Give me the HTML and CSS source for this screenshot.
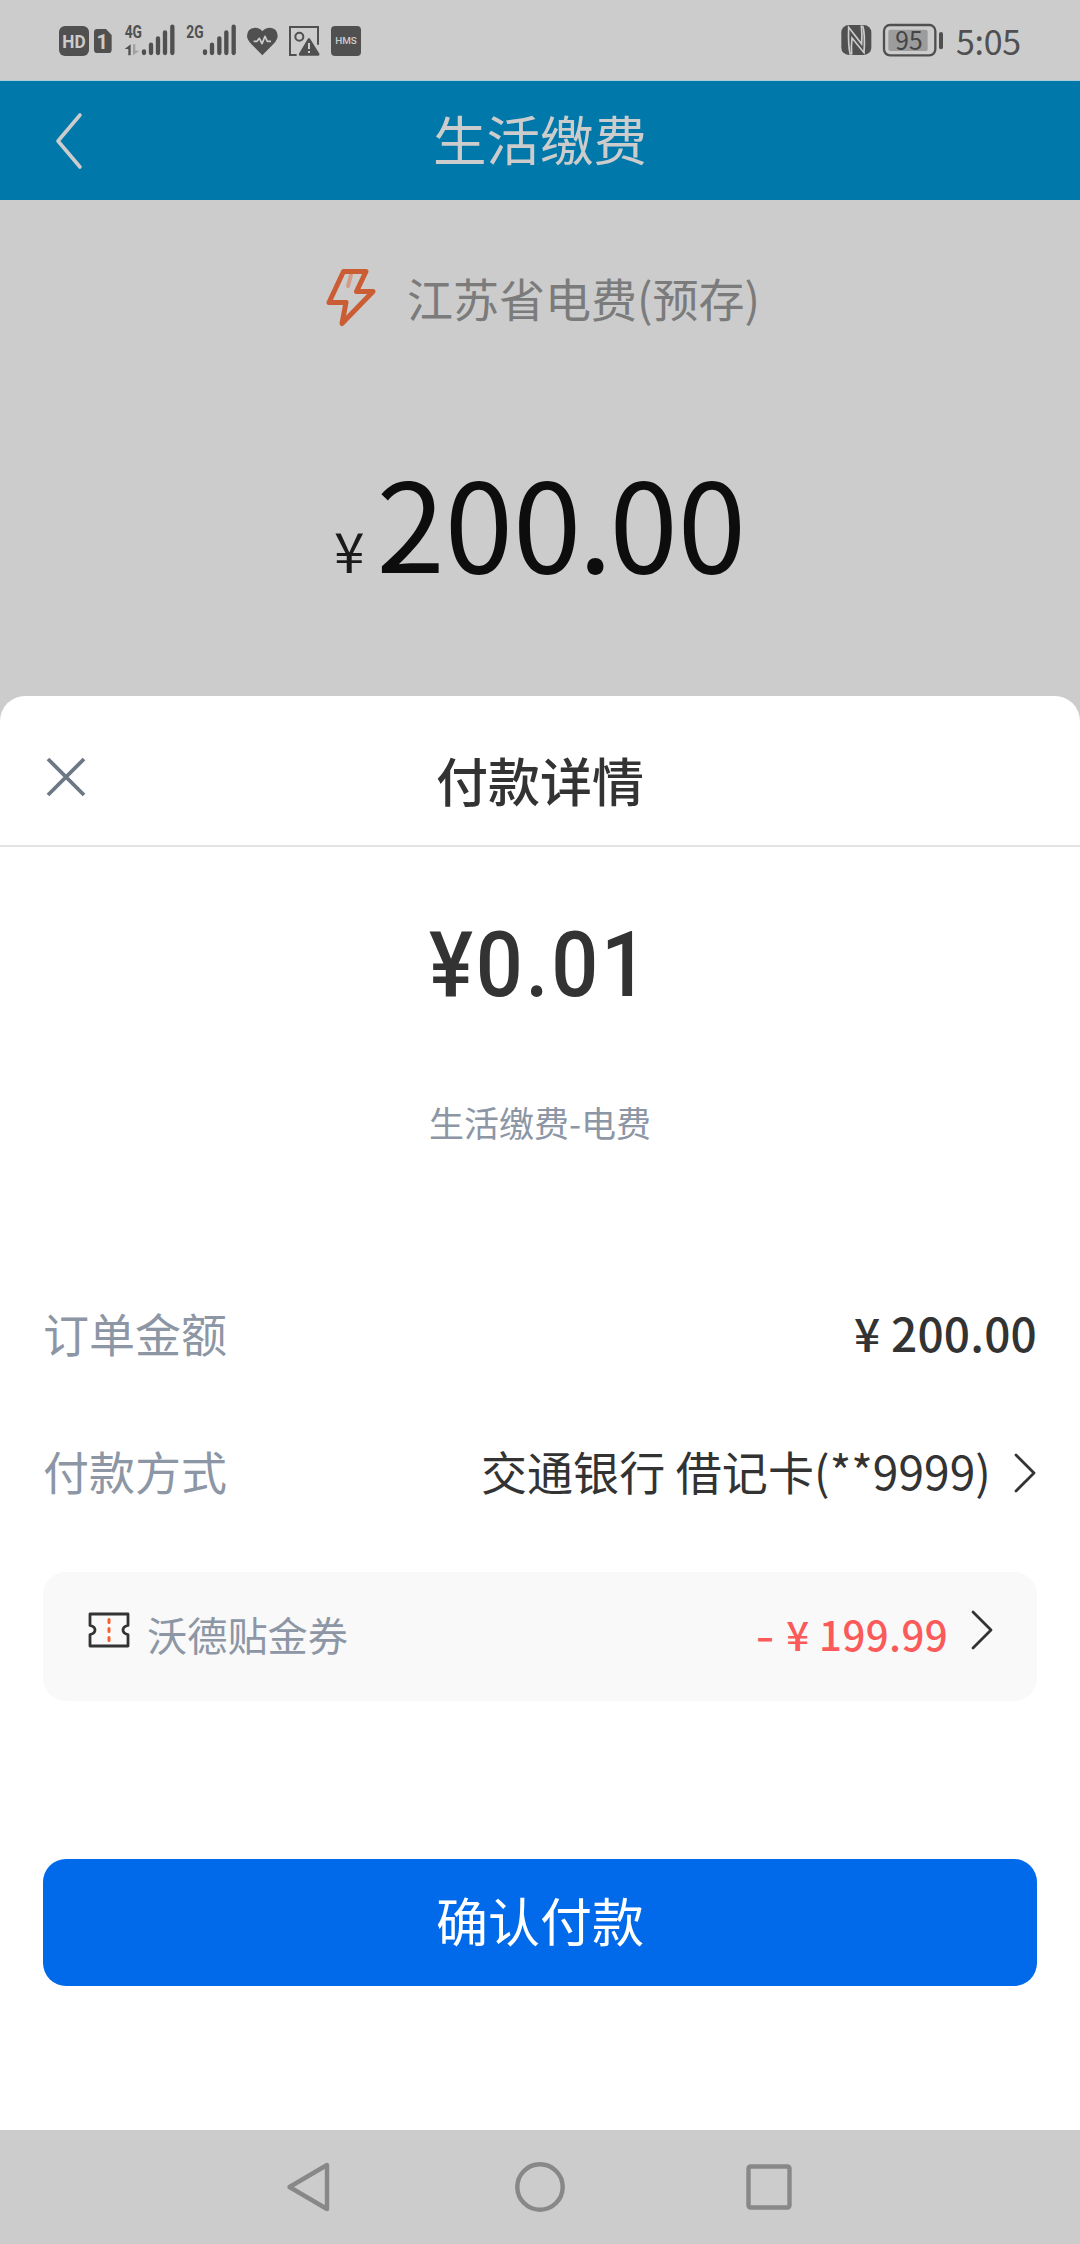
FILE: index.html
```html
<!DOCTYPE html>
<html lang="zh-CN">
<head>
<meta charset="utf-8">
<title>付款详情</title>
<link rel="stylesheet" href="styles.css">
</head>
<body>
<header class="status">
  <div class="status-icons">
    <svg width="30" height="40" viewBox="57 60 90 120"><rect x="57" y="78" width="90" height="90" rx="18" fill="#505050"/><text x="102" y="143" class="t-din" font-size="55" textLength="70" lengthAdjust="spacingAndGlyphs" fill="#ccc">HD</text></svg>
    <svg class="sim" width="18" height="40" viewBox="162 60 54 120"><path d="M172 87h26l17 18v44q0 10-10 10h-33q-10 0-10-10V97q0-10 10-10z" fill="#505050"/><text x="187" y="146" class="t-din" font-size="60" fill="#ccc">1</text></svg>
    <svg class="sig" width="51" height="40" viewBox="252 60 153 120"><text x="280" y="114" class="t-din" font-size="54" textLength="52" lengthAdjust="spacingAndGlyphs" fill="#505050">4G</text><path d="M272 133v33h-7v-19h-11z" fill="#505050"/><path d="M279 133v33l19-14h-12v-19z" fill="#a0a0a0"/><g stroke="#505050" stroke-width="13" stroke-linecap="round"><path d="M312 154v5M333 134v25M354 115v44M375 97v62M397 80v79"/></g></svg>
    <svg class="sig2" width="50" height="40" viewBox="437 60 150 120"><text x="464" y="114" class="t-din" font-size="54" textLength="52" lengthAdjust="spacingAndGlyphs" fill="#505050">2G</text><g stroke="#505050" stroke-width="13" stroke-linecap="round"><path d="M494 154v5M515 134v25M537 115v44M558 97v62M580 80v79"/></g></svg>
    <svg class="heart" width="31" height="40" viewBox="620 60 93 120"><path d="M666 166L632 131Q620 118 620 107Q621 84 644 83Q659 83 666 94Q674 83 689 83Q711 84 712 107Q712 118 700 131z" fill="#505050"/><path d="M640 124h10l7-9 8 16 9-22 7 15h11" fill="none" stroke="#ccc" stroke-width="5" stroke-linejoin="round"/></svg>
    <svg class="pic" width="30" height="40" viewBox="747 60 90 120"><path d="M770 165H750V81H834V134" fill="none" stroke="#505050" stroke-width="6"/><circle cx="778" cy="110" r="12" fill="none" stroke="#505050" stroke-width="6"/><path d="M807 119l27 44h-53z" fill="#505050" stroke="#505050" stroke-width="9" stroke-linejoin="round"/><path d="M807 129v18M807 153v6" stroke="#ccc" stroke-width="6"/></svg>
    <svg class="hms" width="30" height="40" viewBox="873 60 90 120"><rect x="873" y="78" width="90" height="90" rx="12" fill="#505050"/><text x="918" y="132" class="t-hms" font-size="27" textLength="65" lengthAdjust="spacingAndGlyphs" fill="#ccc">HMS</text></svg>
  </div>
  <div class="status-right">
    <svg width="31" height="40" viewBox="63 60 93 120"><rect x="64" y="75" width="90" height="90" rx="22" fill="#505050"/><path d="M91 164Q84 140 86 82L125 132Q127 105 124 76" fill="none" stroke="#ccc" stroke-width="5"/><path d="M128 77Q136 100 132 158L96 114Q93 140 95 164" fill="none" stroke="#ccc" stroke-width="5"/></svg>
    <svg class="battery" width="61" height="40" viewBox="190 60 183 120"><rect x="193" y="75" width="154" height="91" rx="18" fill="none" stroke="#505050" stroke-width="7"/><rect x="206" y="89" width="118" height="64" rx="6" fill="#9c9c9c"/><rect x="358" y="96" width="12" height="52" rx="6" fill="#505050"/><text x="268" y="149" class="t-cjk" font-size="75" textLength="82" lengthAdjust="spacingAndGlyphs" fill="#444">95</text></svg>
    <span class="clock">5:05</span>
  </div>
</header>
<nav class="topbar">
  <svg class="back" width="30" height="58" viewBox="0 0 30 58"><path d="M26 3L4 29L26 55" fill="none" stroke="#ccc" stroke-width="3.6" stroke-linecap="round" stroke-linejoin="round"/></svg>
  <h1>生活缴费</h1>
</nav>
<main class="bill">
  <div class="biller">
    <svg width="50" height="58" viewBox="0 0 50 58"><path d="M25 6l-3 11" stroke="#d39c88" stroke-width="4" stroke-linecap="round"/><path d="M17.500 2.500H40L30.500 22.500H47L16 54.500L20 33.500H3z" fill="none" stroke="#cb5d34" stroke-width="5" stroke-linejoin="round"/></svg>
    <span>江苏省电费(预存)</span>
  </div>
  <div class="bill-amount"><span class="yen">¥</span><span class="num">200<i>.</i>00</span></div>
</main>
<section class="sheet">
  <div class="sheet-head">
    <svg class="close" width="40" height="40" viewBox="0 0 40 40"><path d="M2 2L38 38M38 2L2 38" stroke="#6d7885" stroke-width="3.800"/></svg>
    <h2>付款详情</h2>
  </div>
  <div class="pay">¥0.01</div>
  <div class="desc">生活缴费-电费</div>
  <div class="row order"><span class="label">订单金额</span><span class="value strong">¥ 200.00</span></div>
  <div class="row method"><span class="label">付款方式</span><span class="value">交通银行 借记卡(**9999)</span>
    <svg class="chev" width="24" height="40" viewBox="0 0 24 40"><path d="M3 2L21 20L3 38" fill="none" stroke="#333" stroke-width="2.800" stroke-linecap="round" stroke-linejoin="round"/></svg>
  </div>
  <div class="coupon">
    <svg class="ticket" width="42" height="36" viewBox="0 0 42 36"><path d="M2 2H40V13.500Q35 14.500 35 18Q35 21.500 40 22.500V34H2V22.500Q7 21.500 7 18Q7 14.500 2 13.500z" fill="none" stroke="#333" stroke-width="2.800" stroke-linejoin="round"/><path d="M21 7.500v3M21 16.500v3M21 25.500v3" stroke="#f4602f" stroke-width="3" stroke-linecap="round"/></svg>
    <span class="coupon-name">沃德贴金券</span>
    <span class="discount"><i>-</i> ¥ 199.99</span>
    <svg class="chev" width="24" height="40" viewBox="0 0 24 40"><path d="M3 2L21 20L3 38" fill="none" stroke="#333" stroke-width="2.800" stroke-linecap="round" stroke-linejoin="round"/></svg>
  </div>
  <button class="confirm">确认付款</button>
</section>
<footer class="sysnav">
  <svg width="44" height="52" viewBox="0 0 44 52"><path d="M41 4V48L3.500 26z" fill="none" stroke="#888" stroke-width="4.400" stroke-linejoin="round"/></svg>
  <svg class="home" width="52" height="52" viewBox="0 0 52 52"><circle cx="26" cy="26" r="22.700" fill="none" stroke="#888" stroke-width="4.400"/></svg>
  <svg width="46" height="46" viewBox="0 0 46 46"><rect x="2.500" y="2.500" width="41" height="41" rx="2" fill="none" stroke="#888" stroke-width="4.400"/></svg>
</footer>
</body>
</html>
```
FILE: styles.css
```css
* { box-sizing: border-box; }
body {
  margin: 0;
  width: 1080px;
  height: 2244px;
  display: flex;
  flex-direction: column;
  background: #ccc;
  color: #333;
  font-family: "Noto Sans CJK SC", sans-serif;
  overflow: hidden;
}
svg { display: block; flex: none; overflow: visible; }
h1, h2 { margin: 0; }
span, h1, h2 { white-space: nowrap; }

.status {
  height: 81px;
  padding: 0 59px;
  display: flex;
  justify-content: space-between;
  align-items: center;
  border-bottom: 1px solid #a9ccd8;
}
.status-icons, .status-right { display: flex; align-items: center; }
.sim { margin-left: 5px; }
.sig { margin-left: 12px; }
.sig2 { margin-left: 11px; }
.heart { margin-left: 11px; }
.pic { margin-left: 11px; }
.hms { margin-left: 12px; }
.battery { margin-left: 11px; }
.clock {
  margin-left: 12px;
  width: 65px;
  font-size: 34px;
  letter-spacing: -0.3px;
  line-height: 40px;
  padding-top: 1px;
  color: #505050;
}
.t-din { font-family: Roboto, sans-serif; font-weight: 700; text-anchor: middle; }
.t-hms { font-family: Roboto, sans-serif; font-weight: 500; text-anchor: middle; }
.t-cjk { font-family: "Noto Sans CJK SC", sans-serif; text-anchor: middle; }

.topbar {
  height: 119px;
  padding: 0 54px;
  display: grid;
  grid-template-columns: 30px 1fr 30px;
  align-items: center;
  background: #0078aa;
  color: #ccc;
}
.topbar h1 {
  text-align: center;
  font-size: 53.5px;
  font-weight: 400;
  line-height: 114px;
  height: 119px;
}

.bill { height: 496px; padding-top: 68px; }
.biller {
  display: flex;
  justify-content: center;
  align-items: center;
  height: 60px;
  padding-left: 6px;
  gap: 31px;
  font-size: 46px;
  line-height: 56px;
  color: #7b7b7b;
}
.biller span { margin-bottom: 2px; }
.bill-amount {
  display: flex;
  justify-content: center;
  align-items: baseline;
  margin-top: 91px;
  height: 200px;
  line-height: 200px;
}
.yen { font-size: 55px; margin-right: 12px; padding-bottom: 2px; color: #1a1a1a; }
.num { font-size: 123px; color: #0d0d0d; }
.num i { font-style: normal; margin: 0 -3px; }

.sheet {
  height: 1434px;
  background: #fff;
  border-radius: 25px 25px 0 0;
  padding: 0 43px;
}
.sheet-head {
  height: 151px;
  margin: 0 -43px;
  padding: 12px 46px 0;
  display: grid;
  grid-template-columns: 40px 1fr 40px;
  align-items: center;
  border-bottom: 2px solid #e4e4e4;
}
.sheet-head h2 { text-align: center; font-size: 52px; font-weight: 500; line-height: 76px; padding-top: 6px; }
.pay {
  margin-top: 58px;
  height: 120px;
  line-height: 120px;
  text-align: center;
  font-family: Roboto, sans-serif;
  font-weight: 500;
  font-size: 91px;
  letter-spacing: 3px;
  transform: scaleX(0.91);
}
.desc {
  margin-top: 72px;
  height: 50px;
  line-height: 50px;
  text-align: center;
  font-size: 35px;
  color: #8c96a5;
}
.row {
  display: flex;
  align-items: center;
  height: 70px;
  line-height: 70px;
  font-size: 46px;
}
.order { margin-top: 150px; }
.method { margin-top: 68px; }
.label { color: #8c96a5; flex: 1; }
.strong { font-weight: 500; letter-spacing: 0.2px; }
.method .value { letter-spacing: 0.1px; }
.row .chev { margin: 5px 0 0 22px; }
.coupon {
  margin-top: 67px;
  height: 129px;
  border-radius: 23px;
  background: #f9f9f9;
  padding: 0 43px 0 45px;
  display: flex;
  align-items: center;
  line-height: 60px;
  font-size: 40.2px;
}
.coupon svg { margin-bottom: 14px; }
.coupon span { margin-bottom: 6px; }
.coupon-name { margin-left: 17px; flex: 1; color: #8c96a5; }
.discount { color: #fa5a5a; font-weight: 500; letter-spacing: 0.4px; }
.discount i { display: inline-block; font-style: normal; transform: scaleX(1.3); margin-right: 4px; }
.coupon .chev { margin-left: 22px; }
.confirm {
  display: block;
  width: 100%;
  height: 127px;
  margin-top: 158px;
  padding: 0 0 6px;
  border: 0;
  border-radius: 23px;
  background: #006aea;
  color: #fff;
  font: 400 52px/121px "Noto Sans CJK SC", sans-serif;
}
.sysnav {
  height: 114px;
  padding: 0 288px 0 286px;
  display: flex;
  justify-content: space-between;
  align-items: center;
}
.home { margin-left: 3px; }
```
